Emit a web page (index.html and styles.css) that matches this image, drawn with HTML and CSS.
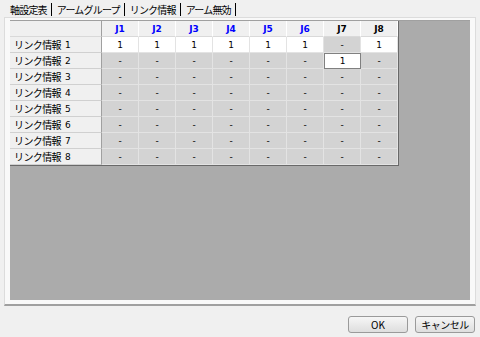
FILE: index.html
```html
<!DOCTYPE html>
<html lang="ja">
<head>
<meta charset="utf-8">
<link rel="stylesheet" href="styles.css">
</head>
<body>
<div class="window">
  <div class="tabs">
    <span class="tab">軸設定表</span>
    <span class="tab">アームグループ</span>
    <span class="tab active">リンク情報</span>
    <span class="tab">アーム無効</span>
  </div>
  <div class="panel">
    <div class="area">
      <div class="grid">
        <div class="corner"></div>
        <div class="ch blue">J1</div><div class="ch blue">J2</div><div class="ch blue">J3</div><div class="ch blue">J4</div>
        <div class="ch blue">J5</div><div class="ch blue">J6</div><div class="ch">J7</div><div class="ch">J8</div>

        <div class="rh">リンク情報<span class="num">1</span></div>
        <div class="c on">1</div><div class="c on">1</div><div class="c on">1</div><div class="c on">1</div>
        <div class="c on">1</div><div class="c on">1</div><div class="c">-</div><div class="c on">1</div>

        <div class="rh">リンク情報<span class="num">2</span></div>
        <div class="c">-</div><div class="c">-</div><div class="c">-</div><div class="c">-</div>
        <div class="c">-</div><div class="c">-</div><div class="c on sel">1</div><div class="c">-</div>

        <div class="rh">リンク情報<span class="num">3</span></div>
        <div class="c">-</div><div class="c">-</div><div class="c">-</div><div class="c">-</div>
        <div class="c">-</div><div class="c">-</div><div class="c">-</div><div class="c">-</div>

        <div class="rh">リンク情報<span class="num">4</span></div>
        <div class="c">-</div><div class="c">-</div><div class="c">-</div><div class="c">-</div>
        <div class="c">-</div><div class="c">-</div><div class="c">-</div><div class="c">-</div>

        <div class="rh">リンク情報<span class="num">5</span></div>
        <div class="c">-</div><div class="c">-</div><div class="c">-</div><div class="c">-</div>
        <div class="c">-</div><div class="c">-</div><div class="c">-</div><div class="c">-</div>

        <div class="rh">リンク情報<span class="num">6</span></div>
        <div class="c">-</div><div class="c">-</div><div class="c">-</div><div class="c">-</div>
        <div class="c">-</div><div class="c">-</div><div class="c">-</div><div class="c">-</div>

        <div class="rh">リンク情報<span class="num">7</span></div>
        <div class="c">-</div><div class="c">-</div><div class="c">-</div><div class="c">-</div>
        <div class="c">-</div><div class="c">-</div><div class="c">-</div><div class="c">-</div>

        <div class="rh">リンク情報<span class="num">8</span></div>
        <div class="c">-</div><div class="c">-</div><div class="c">-</div><div class="c">-</div>
        <div class="c">-</div><div class="c">-</div><div class="c">-</div><div class="c">-</div>
      </div>
    </div>
  </div>
  <div class="buttons">
    <button class="btn ok">OK</button>
    <button class="btn">キャンセル</button>
  </div>
</div>
</body>
</html>
```

FILE: styles.css
```css
* { box-sizing: border-box; }
html, body { margin: 0; padding: 0; }
body {
  background: #f0f0f0;
  font-family: "Noto Sans CJK JP", "Noto Sans", sans-serif;
  font-size: 10px;
  color: #000;
}
.window {
  width: 480px;
  height: 337px;
  padding-top: 2px;
}
.tabs {
  display: flex;
  height: 15px;
  padding-left: 8px;
  align-items: center;
}
.tab {
  padding: 0 4px 0 2px;
  border-right: 1px solid #000;
  line-height: 13px;
  letter-spacing: -0.8px;
  margin-right: 3px;
}
.panel {
  margin: 0 4px 0 4px;
  height: 289px;
  background: #f9f9f9;
  border: 1px solid #dcdcdc;
  border-bottom: 2px solid #a0a0a0;
  padding: 2px 5px 4px 5px;
}
.area {
  background: #ababab;
  height: 280px;
  border-top: 1px solid #a0a0a0;
}
.grid {
  display: grid;
  grid-template-columns: 92px repeat(8, 37px);
  grid-auto-rows: 16px;
  width: 389px;
  border-right: 1px solid #696969;
  border-bottom: 1px solid #696969;
}
.corner, .ch, .rh {
  background: #f0f0f0;
  border-right: 1px solid #d9d9d9;
  border-bottom: 1px solid #d9d9d9;
}
.corner { border-right-color: #a0a0a0; }
.ch {
  display: flex;
  align-items: center;
  justify-content: center;
  font-family: "DejaVu Sans", sans-serif;
  font-weight: bold;
  font-size: 9px;
  border-right-color: #ffffff;
}
.blue { color: #0000ff; }
.rh {
  display: flex;
  align-items: center;
  padding-left: 4px;
  letter-spacing: -0.6px;
  border-right-color: #a0a0a0;
  border-bottom-color: #d0d0d0;
  white-space: nowrap;
}
.num {
  margin-left: 4px;
  letter-spacing: 0;
  font-family: "DejaVu Sans", sans-serif;
  font-size: 9px;
}
.c {
  display: flex;
  align-items: center;
  justify-content: center;
  background: #d3d3d3;
  border-right: 1px solid #e3e3e3;
  border-bottom: 1px solid #e3e3e3;
  font-family: "DejaVu Sans", sans-serif;
  font-size: 9px;
}
.c.on {
  background: #ffffff;
  border-right-color: #e3e3e3;
  border-bottom-color: #e3e3e3;
}
.c.sel {
  border: 1px solid #808080;
}
.buttons {
  display: flex;
  justify-content: flex-end;
  gap: 7px;
  padding-right: 5px;
  margin-top: 10px;
}
.btn {
  width: 60px;
  height: 17px;
  padding: 0;
  border: 1px solid #9a9a9a;
  border-radius: 3px;
  background: linear-gradient(#f6f6f6, #dedede);
  font-family: "Noto Sans CJK JP", sans-serif;
  font-size: 10px;
  line-height: 14px;
  color: #000;
  letter-spacing: -0.5px;
}
.btn.ok { letter-spacing: 0; }
```
